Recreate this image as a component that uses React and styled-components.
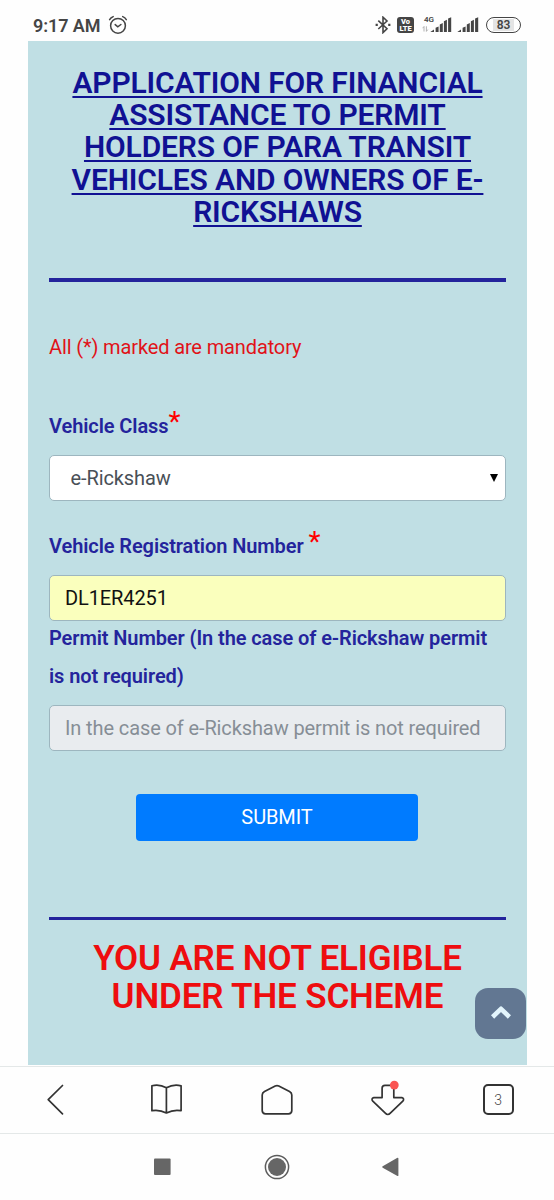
import React, { useState } from 'react';
import styled, { createGlobalStyle } from 'styled-components';

const App = () => {
    const [vehicleClass, setVehicleClass] = useState('e-Rickshaw');
    const [regNumber, setRegNumber] = useState('DL1ER4251');

    return (
        <Screen>
            <GlobalStyle />
            <StatusBar>
                <Clock>9:17 AM</Clock>
                <AlarmIcon />
                <StatusIcons>
                    <BluetoothIcon />
                    <VolteBadge><span>Vo</span><span>LTE</span></VolteBadge>
                    <Network>
                        <NetworkType>4G</NetworkType>
                        <SignalIcon data />
                    </Network>
                    <SignalIcon />
                    <Battery><Charge>83</Charge></Battery>
                </StatusIcons>
            </StatusBar>

            <Page>
                <Title>
                    APPLICATION FOR FINANCIAL<br />
                    ASSISTANCE TO PERMIT<br />
                    HOLDERS OF PARA TRANSIT<br />
                    VEHICLES AND OWNERS OF E-<br />
                    RICKSHAWS
                </Title>
                <Rule $size={4} />
                <Notice>All (*) marked are mandatory</Notice>

                <Field $height={75}>
                    <Label>Vehicle Class<Star>*</Star></Label>
                </Field>
                <Control>
                    <Select value={vehicleClass} onChange={(e) => setVehicleClass(e.target.value)}>
                        <option>e-Rickshaw</option>
                    </Select>
                    <Caret viewBox="0 0 8 8"><path d="M0 0H8L4 8Z" /></Caret>
                </Control>

                <Field $height={74}>
                    <Label>Vehicle Registration Number <Star>*</Star></Label>
                </Field>
                <Input value={regNumber} onChange={(e) => setRegNumber(e.target.value)} />
                <PermitLabel>
                    Permit Number (In the case of e-Rickshaw permit<br />is not required)
                </PermitLabel>
                <Input disabled placeholder="In the case of e-Rickshaw permit is not required" />

                <Submit type="button">SUBMIT</Submit>
                <Rule $size={3} />
                <Result>YOU ARE NOT ELIGIBLE<br />UNDER THE SCHEME</Result>

                <ScrollTop type="button">
                    <svg width="24" height="18" viewBox="0 0 24 18">
                        <path d="M3.6 13L12 4.8L20.4 13" fill="none" stroke="#e3f5fc" strokeWidth="4.6" strokeLinejoin="round" />
                    </svg>
                </ScrollTop>
            </Page>

            <BrowserBar>
                <NavButton><BackIcon /></NavButton>
                <NavButton><BookIcon /></NavButton>
                <NavButton><HomeIcon /></NavButton>
                <NavButton><DownloadIcon /></NavButton>
                <NavButton><TabCount>3</TabCount></NavButton>
            </BrowserBar>

            <SystemBar>
                <svg width="18" height="18"><rect x="0" y="0.4" width="16.6" height="16.6" rx="1" fill="#666" /></svg>
                <svg width="26" height="26" viewBox="0 0 26 26">
                    <circle cx="13" cy="13" r="11.6" fill="none" stroke="#5c5c5c" strokeWidth="1.5" />
                    <circle cx="13" cy="13" r="9" fill="#666" />
                </svg>
                <svg width="18" height="20" viewBox="0 0 18 20"><path d="M0.7 9.3L15 1Q16.4 0.3 16.4 1.6V18.2Q16.4 19.6 15 18.8L0.7 10.7Q-0.3 10 0.7 9.3Z" fill="#666" /></svg>
            </SystemBar>
        </Screen>
    );
};

export default App;

// Icons
const AlarmIcon = () => (
    <svg width="20" height="20" viewBox="0 0 20 20" fill="none" stroke="#454545" strokeWidth="1.5" strokeLinecap="round">
        <circle cx="10" cy="10.8" r="7.4" />
        <path d="M7.2 9.6L9.8 11.9L12.9 9.5M1.6 4.6Q2.8 2.6 5.2 1.6M14.7 1.6Q17 2.5 18.3 4.6" />
    </svg>
);

const BluetoothIcon = () => (
    <svg width="16" height="18" viewBox="0 0 16 18" fill="none" stroke="#454545" strokeWidth="1.6">
        <path d="M3.3 4.7L12 12.7L8 16.6V1.2L12 5L3.3 13" />
        <path d="M0.6 8.9H2.8M13.2 8.9H15.4" strokeWidth="2.2" />
    </svg>
);

const SignalIcon = ({ data }) => (
    <svg width={data ? 30 : 22} height="16" viewBox={data ? '-8 0 30 16' : '0 0 22 16'} fill="#454545">
        <path d="M0.3 15L4 12.4V15ZM5.6 10.8L8.6 9.6V15H5.6ZM9.8 7.6L12.8 6V15H9.8ZM13.9 4.2L16.9 2.7V15H13.9ZM18.1 1.6L21.2 0.2V15H18.1Z" />
        {data && <path d="M-6 14.5V9.5L-7.4 11.2M-3.6 9.3V14.4L-2.2 12.6" fill="none" stroke="#aaa" strokeWidth="0.9" />}
    </svg>
);

const BackIcon = () => (
    <IconBox viewBox="0 0 36 36"><path d="M25.5 3.5L11.2 17.6L25.5 31.8" /></IconBox>
);

const BookIcon = () => (
    <IconBox viewBox="0 0 36 36">
        <path d="M18.4 5.8Q11.4 1.9 3.9 3.8V28.7Q11.4 27.3 18.4 31Q25.4 27.3 33.1 28.7V3.8Q25.4 1.9 18.4 5.8ZM18.4 5.8V31" />
    </IconBox>
);

const HomeIcon = () => (
    <IconBox viewBox="0 0 36 36">
        <path d="M16.2 4Q18 3.1 19.8 4L30.5 9.5Q32.8 10.8 32.8 13V28.5Q32.8 31.8 29.5 31.8H6.5Q3.2 31.8 3.2 28.5V13Q3.2 10.8 5.5 9.5Z" />
    </IconBox>
);

const DownloadIcon = () => (
    <IconBox viewBox="0 0 36 36">
        <path d="M13.1 15.6V6.2Q13.1 3.3 16 3.3H22Q24.8 3.3 24.8 6.2V15.6H32.8Q35.8 16.5 33.8 19.2L21.3 31.2Q18.8 33.8 16.3 31.2L3.8 19.2Q1.8 16.5 4.8 15.6Z" />
        <circle cx="25.3" cy="3.1" r="4.4" fill="#fa5553" stroke="none" />
    </IconBox>
);

// Styled Components
const GlobalStyle = createGlobalStyle`
    body {
        margin: 0;
        background: #fefefe;
        font-family: Roboto, sans-serif;
    }
    * {
        box-sizing: border-box;
    }
`

const Screen = styled.div`
    width: 554px;
    height: 1200px;
    display: flex;
    flex-direction: column;
    overflow: hidden;
`

const StatusBar = styled.header`
    display: flex;
    align-items: center;
    height: 41px;
    padding: 9px 33px 0 33px;
    color: #454545;
`

const Clock = styled.span`
    width: 75px;
    font-size: 18px;
    font-weight: 600;
    letter-spacing: -0.1px;
    white-space: nowrap;
`

const StatusIcons = styled.div`
    display: flex;
    align-items: center;
    margin-left: auto;
`

const VolteBadge = styled.span`
    display: flex;
    flex-direction: column;
    align-items: center;
    justify-content: center;
    width: 17px;
    height: 16px;
    margin: 0 8px 0 6px;
    border-radius: 3px;
    background: #454545;
    color: #fff;
    font-size: 7.5px;
    line-height: 7px;
    font-weight: 900;
`

const Network = styled.div`
    position: relative;
    display: flex;
    margin-right: 5px;
`

const NetworkType = styled.span`
    position: absolute;
    left: 2px;
    top: -1px;
    font-size: 8px;
    line-height: 8px;
    font-weight: 600;
`

const Battery = styled.span`
    display: flex;
    width: 35px;
    height: 16px;
    margin-left: 7px;
    padding: 1px 6px;
    border: 1.5px solid #454545;
    border-radius: 8px;
`

const Charge = styled.span`
    flex: 1;
    background: #e4e4e4;
    font-size: 12px;
    line-height: 13px;
    font-weight: 600;
    text-align: center;
`

const Page = styled.main`
    position: relative;
    display: flex;
    flex-direction: column;
    flex: none;
    width: 499px;
    height: 1024px;
    margin: 0 0 1px 28px;
    padding: 26px 21px 0;
    background: #c0dfe4;
`

const Title = styled.h1`
    height: 211px;
    margin: 0 -20px;
    color: #101193;
    font-size: 30px;
    line-height: 32.2px;
    font-weight: 600;
    letter-spacing: -0.15px;
    text-align: center;
    text-decoration: underline;
    text-decoration-thickness: 2px;
    text-decoration-skip-ink: none;
    text-underline-offset: 3px;
`

const Rule = styled.hr`
    flex: none;
    width: 100%;
    height: ${({ $size }) => $size}px;
    margin: 0;
    border: none;
    background: #24249c;
`

const Notice = styled.p`
    height: 98px;
    margin: 0;
    padding-top: 50px;
    color: #e01218;
    font-size: 20px;
    line-height: 30px;
    letter-spacing: -0.13px;
`

const Field = styled.div`
    display: flex;
    align-items: flex-end;
    height: ${({ $height }) => $height}px;
    padding-bottom: 10px;
`

const Label = styled.label`
    color: #24249c;
    font-size: 20px;
    line-height: 38px;
    font-weight: 600;
    letter-spacing: -0.09px;
    white-space: pre;
`

const Star = styled.span`
    color: #f00;
    font-size: 28px;
    line-height: 20px;
    font-weight: 400;
    vertical-align: 2px;
`

const PermitLabel = styled(Label)`
    height: 86px;
    margin-top: -2px;
    line-height: 38.2px;
`

const Control = styled.div`
    position: relative;
`

const Input = styled.input`
    display: block;
    flex: none;
    width: 100%;
    height: 46px;
    padding: 0 15px;
    border: 1.5px solid #9db6bf;
    border-radius: 5px;
    background: #faffbd;
    color: #111;
    font-family: inherit;
    font-size: 20px;
    letter-spacing: -0.11px;

    &:disabled {
        background: #e9ecef;
    }

    &::placeholder {
        color: #868e96;
        opacity: 1;
    }
`

const Select = styled(Input).attrs({ as: 'select' })`
    appearance: none;
    padding-left: 20.5px;
    background: #fff;
    color: #495057;
`

const Caret = styled.svg`
    position: absolute;
    right: 8px;
    top: 19px;
    width: 8px;
    height: 8px;
`

const Submit = styled.button`
    flex: none;
    align-self: center;
    width: 282px;
    height: 47px;
    margin: 43px 1px 76px 0;
    padding-bottom: 3px;
    border: none;
    border-radius: 4px;
    background: #007bff;
    color: #fff;
    font-family: inherit;
    font-size: 20px;
    letter-spacing: -0.1px;
`

const Result = styled.h2`
    margin: 20px 0 0;
    color: #ee0d0f;
    font-size: 35px;
    line-height: 38px;
    font-weight: 600;
    letter-spacing: -0.15px;
    text-align: center;
`

const ScrollTop = styled.button`
    position: absolute;
    right: 1px;
    bottom: 26.5px;
    display: flex;
    align-items: center;
    justify-content: center;
    width: 51px;
    height: 51px;
    padding: 0;
    border: none;
    border-radius: 13px;
    background: #627792;
`

const BrowserBar = styled.nav`
    display: grid;
    grid-template-columns: repeat(5, 110.7px);
    height: 68px;
    border: solid #e4e8e8;
    border-width: 1px 0;
`

const NavButton = styled.div`
    display: flex;
    align-items: center;
    justify-content: center;
`

const IconBox = styled.svg`
    width: 36px;
    height: 36px;
    overflow: visible;
    fill: none;
    stroke: #333;
    stroke-width: 1.7;
    stroke-linejoin: round;
    stroke-linecap: round;
`

const TabCount = styled.span`
    width: 31px;
    height: 31px;
    margin-bottom: 2px;
    border: 2px solid #333;
    border-radius: 5px;
    color: #444;
    font-size: 14px;
    font-weight: 300;
    line-height: 28px;
    text-align: center;
`

const SystemBar = styled.nav`
    display: grid;
    grid-template-columns: repeat(3, 114px);
    justify-content: center;
    justify-items: center;
    align-items: center;
    height: 66px;
`
